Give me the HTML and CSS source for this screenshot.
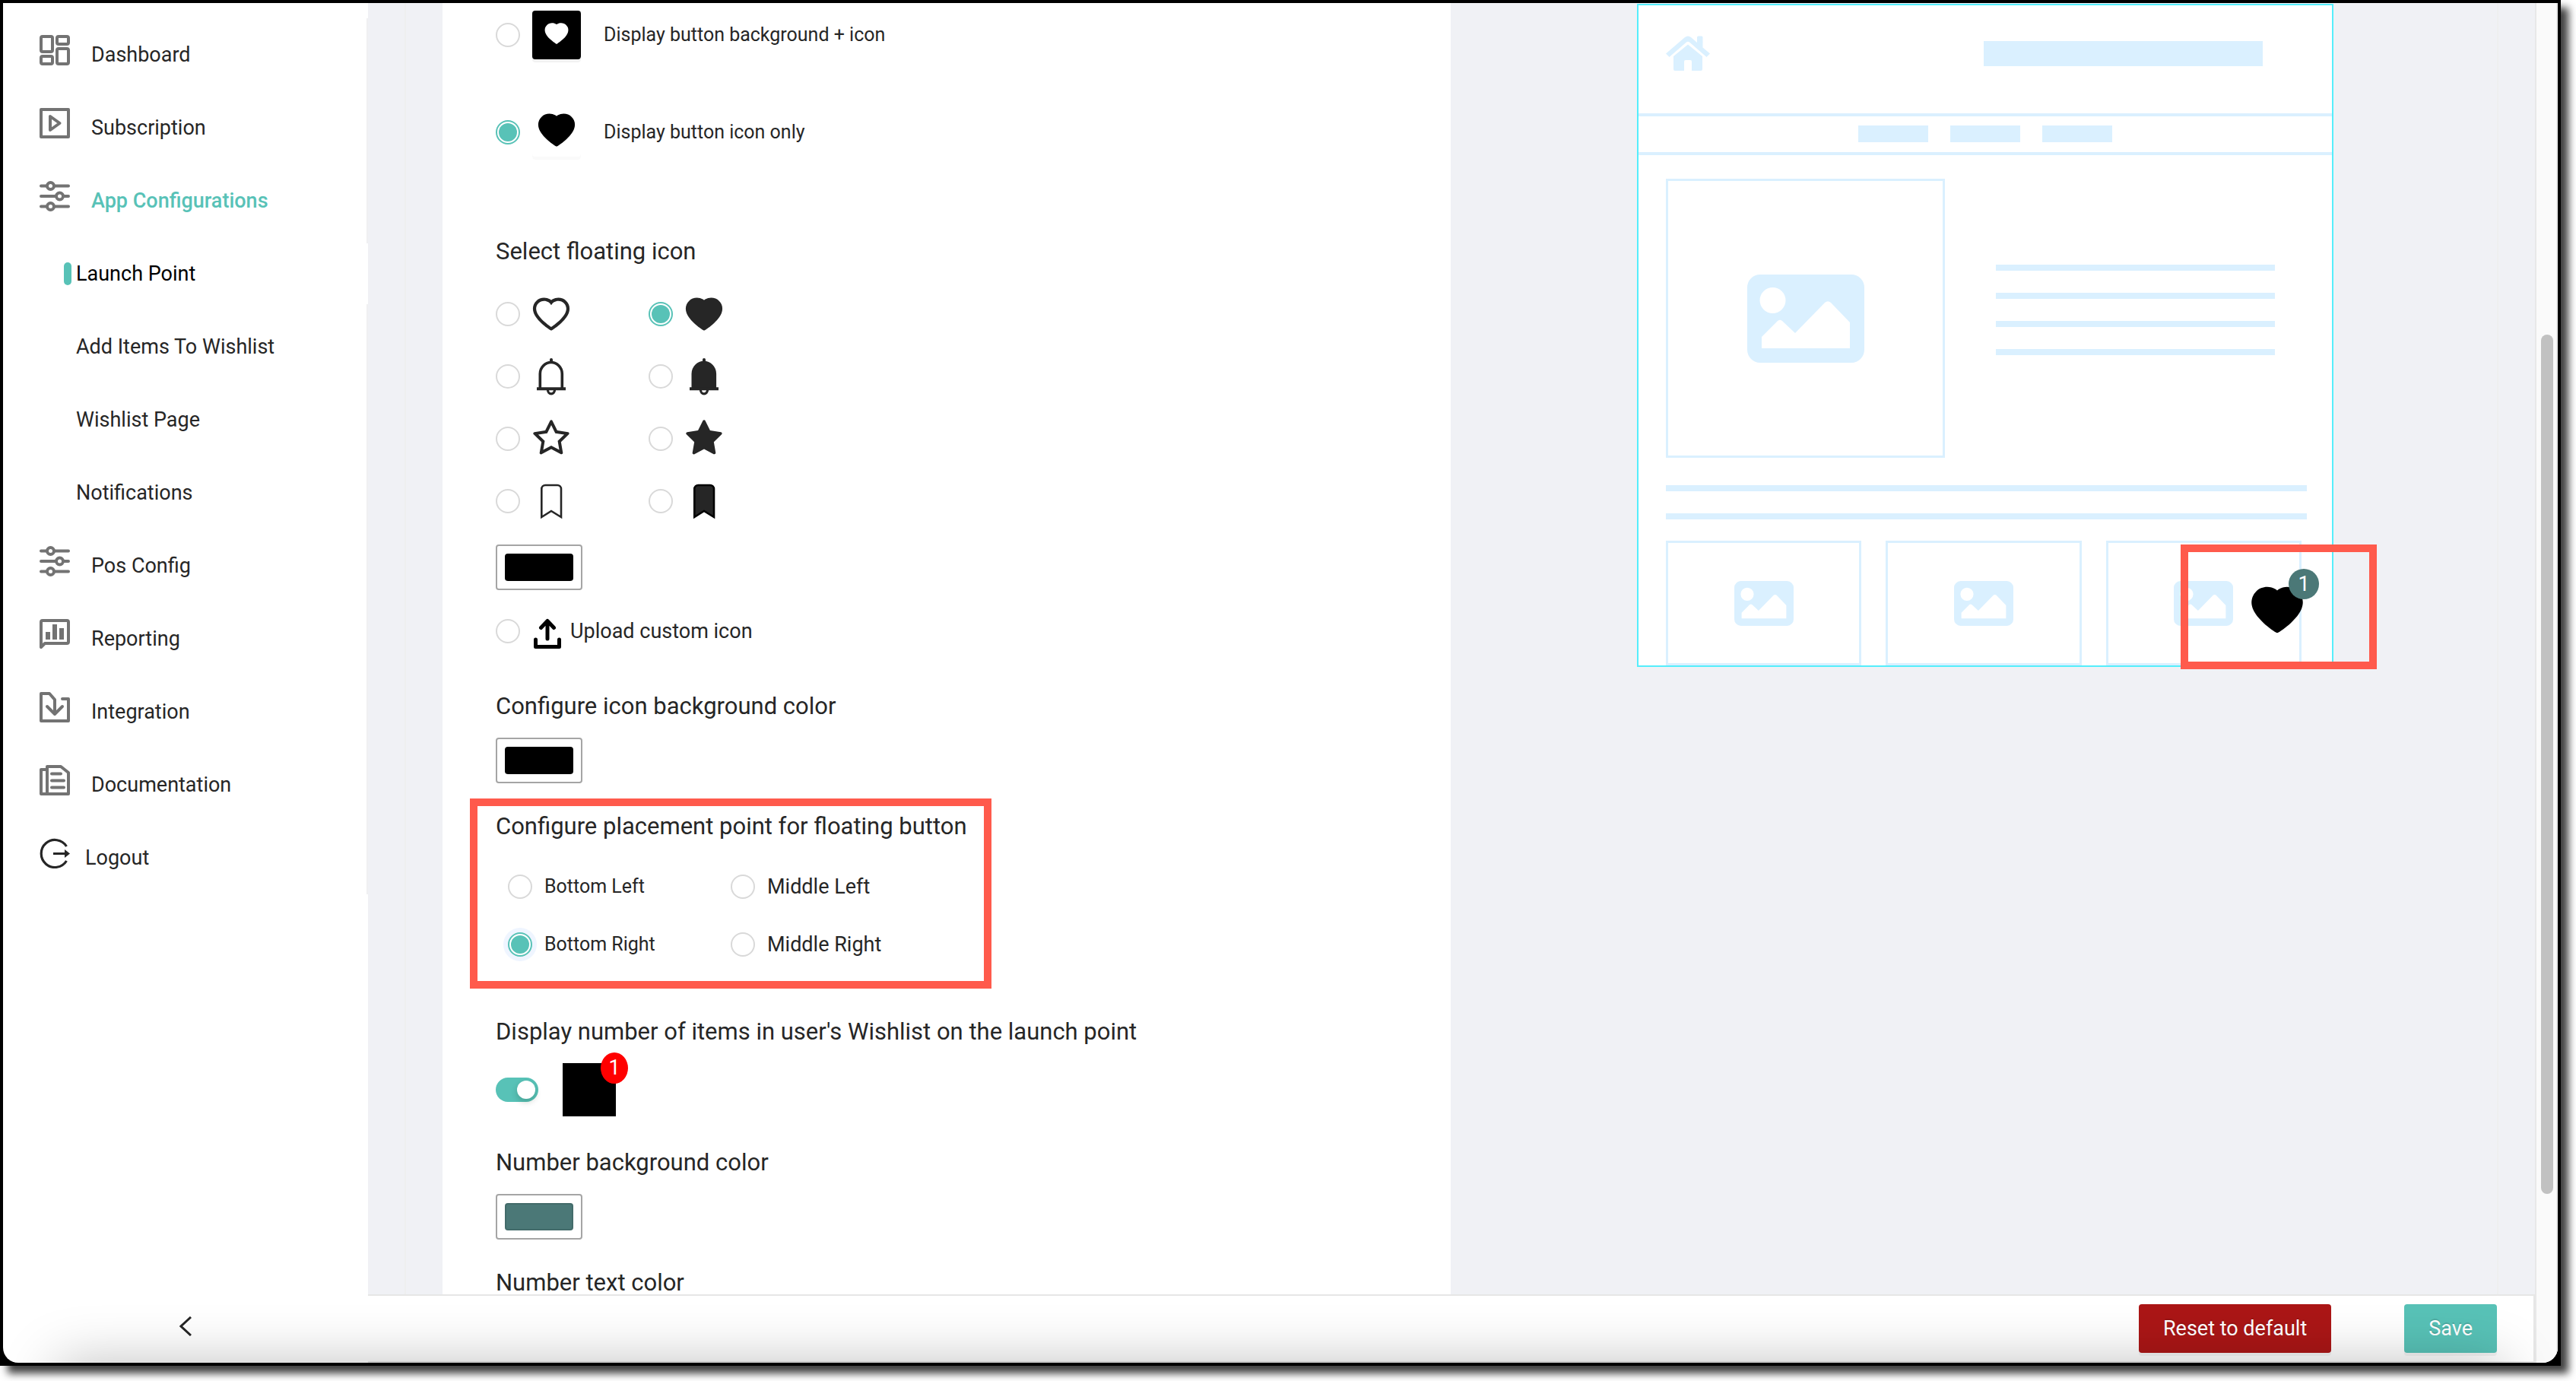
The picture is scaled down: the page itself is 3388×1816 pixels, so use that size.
FILE: index.html
```html
<!DOCTYPE html>
<html lang="en">
<head>
<meta charset="utf-8">
<meta name="viewport" content="width=device-width, initial-scale=1">
<title>Launch Point</title>
<link rel="stylesheet" href="styles.css">
</head>
<body>
<svg class="sprite" aria-hidden="true">
  <symbol id="heart" viewBox="64 64 896 896"><path d="M923 283.6a260.04 260.04 0 0 0-56.9-82.8 264.4 264.4 0 0 0-84-55.5A265.34 265.34 0 0 0 679.7 125c-49.3 0-97.4 13.5-139.2 39-10 6.1-19.5 12.8-28.5 20.1-9-7.3-18.5-14-28.5-20.1-41.8-25.5-89.9-39-139.2-39-35.5 0-69.9 6.8-102.4 20.3-31.4 13-59.7 31.7-84 55.5a258.44 258.44 0 0 0-56.9 82.8c-13.9 32.3-21 66.6-21 101.9 0 33.3 6.8 68 20.3 103.3 11.3 29.5 27.5 60.1 48.2 91 32.8 48.9 77.9 99.9 133.9 151.6 92.8 85.7 184.7 144.9 188.6 147.3l23.7 15.2c10.5 6.7 24 6.7 34.5 0l23.7-15.2c3.9-2.5 95.7-61.6 188.6-147.3 56-51.7 101.1-102.7 133.9-151.6 20.7-30.9 37-61.5 48.2-91 13.5-35.3 20.3-70 20.3-103.3.1-35.3-7-69.6-20.9-101.9z"/></symbol>
  <symbol id="sliders" viewBox="0 0 40 40"><g fill="none" stroke="currentColor" stroke-width="4" stroke-linecap="round"><path d="M2 6.500H9M20 6.500H38M2 20H21M32 20H38M2 33.500H9M20 33.500H38"/><circle cx="14.500" cy="6.500" r="4.500"/><circle cx="26.500" cy="20" r="4.500"/><circle cx="14.500" cy="33.500" r="4.500"/></g></symbol>
  <symbol id="image" viewBox="0 0 154 116"><path fill-rule="evenodd" d="M17 0H137a17 17 0 0 1 17 17V99a17 17 0 0 1-17 17H17A17 17 0 0 1 0 99V17A17 17 0 0 1 17 0zM33.500 17a17 17 0 1 0 0 34 17 17 0 0 0 0-34zM19 97H135V63L110 37q-4-3.500-8 0L63 77 46 61q-3-2.500-6 0L19 82z"/></symbol>
</svg>

<div class="window">
  <div class="app">
    <aside class="sidebar">
      <nav>
        <ul class="menu">
          <li><a class="menu-link" href="#dashboard">
            <svg class="menu-icon" viewBox="0 0 40 40"><g fill="none" stroke="currentColor" stroke-width="4"><rect x="2" y="2" width="15" height="20" rx="2"/><rect x="23" y="2" width="15" height="10" rx="2"/><rect x="2" y="28" width="15" height="10" rx="2"/><rect x="23" y="18" width="15" height="20" rx="2"/></g></svg>
            Dashboard</a></li>
          <li><a class="menu-link" href="#subscription">
            <svg class="menu-icon" viewBox="0 0 40 40"><g fill="none" stroke="currentColor" stroke-width="4" stroke-linejoin="round"><rect x="2" y="2" width="36" height="36"/><path d="M14 11V29L26.500 20z"/></g></svg>
            Subscription</a></li>
          <li><a class="menu-link open" href="#app-configurations">
            <svg class="menu-icon"><use href="#sliders"/></svg>
            App Configurations</a></li>
          <li>
            <ul class="submenu">
              <li><a class="menu-link current" href="#launch-point" aria-current="page">Launch Point</a></li>
              <li><a class="menu-link" href="#add-items">Add Items To Wishlist</a></li>
              <li><a class="menu-link" href="#wishlist-page">Wishlist Page</a></li>
              <li><a class="menu-link" href="#notifications">Notifications</a></li>
            </ul>
          </li>
          <li><a class="menu-link" href="#pos-config">
            <svg class="menu-icon"><use href="#sliders"/></svg>
            Pos Config</a></li>
          <li><a class="menu-link" href="#reporting">
            <svg class="menu-icon" viewBox="0 0 40 40"><path d="M2 37V4a2 2 0 0 1 2-2H36a2 2 0 0 1 2 2V30a2 2 0 0 1-2 2H7z" fill="none" stroke="currentColor" stroke-width="4" stroke-linejoin="round"/><path fill="currentColor" d="M8 17h6v10H8zM17 7h6v20h-6zM26 12h6v15h-6z"/></svg>
            Reporting</a></li>
          <li><a class="menu-link" href="#integration">
            <svg class="menu-icon" viewBox="0 0 40 40"><g fill="none" stroke="currentColor" stroke-width="4" stroke-linejoin="round" stroke-linecap="round"><path d="M20 28V10L13 2H2V38H38V9H30"/><path d="M10 19 20 29 30 19"/></g></svg>
            Integration</a></li>
          <li><a class="menu-link" href="#documentation">
            <svg class="menu-icon" viewBox="0 0 40 40"><g fill="none" stroke="currentColor" stroke-width="4" stroke-linejoin="round" stroke-linecap="round"><path d="M10 6H2V38H38V10L28 2H10V38"/><path d="M16 11.500H28M16 20.500H32M16 29.500H32"/></g></svg>
            Documentation</a></li>
          <li><a class="menu-link logout" href="#logout">
            <svg class="menu-icon" viewBox="0 0 40 40"><path d="M35.500 11A18 18 0 1 0 35.500 30M18 20.500H35" fill="none" stroke="currentColor" stroke-width="3.200"/><path fill="currentColor" d="M33 15 40 20.500 33 26z"/></svg>
            Logout</a></li>
        </ul>
      </nav>
      <button class="collapse" type="button" aria-label="Collapse menu">
        <svg viewBox="0 0 16 26"><path d="M15 1 2 13 15 25" fill="none" stroke="currentColor" stroke-width="3"/></svg>
      </button>
    </aside>

    <main class="main">
      <div class="content">
        <div class="columns">
          <form class="card" id="settings">
            <div class="display-options">
              <label class="display-option"><input class="radio" type="radio" name="display"><span class="tile tile-dark"><svg><use href="#heart"/></svg></span>Display button background + icon</label>
              <label class="display-option"><input class="radio" type="radio" name="display" checked><span class="tile"><svg><use href="#heart"/></svg></span>Display button icon only</label>
            </div>

            <section class="icon-section">
              <h2 class="heading">Select floating icon</h2>
              <div class="icon-grid">
                <label class="icon-option"><input class="radio" type="radio" name="icon" aria-label="Heart outline"><svg class="glyph" viewBox="64 64 896 896"><path fill="currentColor" d="M923 283.6a260.04 260.04 0 0 0-56.9-82.8 264.4 264.4 0 0 0-84-55.5A265.34 265.34 0 0 0 679.7 125c-49.3 0-97.4 13.5-139.2 39-10 6.1-19.5 12.8-28.5 20.1-9-7.3-18.5-14-28.5-20.1-41.8-25.5-89.9-39-139.2-39-35.5 0-69.9 6.8-102.4 20.3-31.4 13-59.7 31.7-84 55.5a258.44 258.44 0 0 0-56.9 82.8c-13.9 32.3-21 66.6-21 101.9 0 33.3 6.8 68 20.3 103.3 11.3 29.5 27.5 60.1 48.2 91 32.8 48.9 77.9 99.9 133.9 151.6 92.8 85.7 184.7 144.9 188.6 147.3l23.7 15.2c10.5 6.7 24 6.7 34.5 0l23.7-15.2c3.9-2.5 95.7-61.6 188.6-147.3 56-51.7 101.1-102.7 133.9-151.6 20.7-30.9 37-61.5 48.2-91 13.5-35.3 20.3-70 20.3-103.3.1-35.3-7-69.6-20.9-101.9zM512 814.8S156 586.7 156 385.5C156 283.6 240.3 201 344.3 201c73.1 0 136.5 40.8 167.7 100.4C543.2 241.8 606.600 201 679.7 201c104 0 188.3 82.600 188.3 184.5 0 201.2-356 429.3-356 429.3z"/></svg></label>
                <label class="icon-option"><input class="radio" type="radio" name="icon" aria-label="Heart" checked><svg class="glyph"><use href="#heart"/></svg></label>

                <label class="icon-option"><input class="radio" type="radio" name="icon" aria-label="Bell outline"><svg class="glyph" viewBox="0 0 50 50"><g fill="none" stroke="currentColor"><path stroke-width="3.600" d="M10.300 40V21.500a14.500 15 0 0 1 29 0V40"/><path stroke-width="4" stroke-linecap="round" d="M25 3V5"/><path stroke-width="4" d="M6 41.300H44"/><path stroke-width="3.200" d="M20.500 43a4.500 4.800 0 0 0 9 0"/></g></svg></label>
                <label class="icon-option"><input class="radio" type="radio" name="icon" aria-label="Bell"><svg class="glyph" viewBox="0 0 50 50"><g fill="none" stroke="currentColor"><path fill="currentColor" stroke-width="3.600" d="M10.300 40V21.500a14.500 15 0 0 1 29 0V40"/><path stroke-width="4" stroke-linecap="round" d="M25 3V5"/><path stroke-width="4" d="M6 41.300H44"/><path stroke-width="3.200" d="M20.500 43a4.500 4.800 0 0 0 9 0"/></g></svg></label>

                <label class="icon-option"><input class="radio" type="radio" name="icon" aria-label="Star outline"><svg class="glyph" viewBox="64 64 896 896"><path fill="currentColor" d="M908.1 353.1l-253.9-36.9L540.7 86.1c-3.1-6.3-8.2-11.4-14.5-14.5-15.8-7.8-35-1.3-42.9 14.5L369.8 316.2l-253.9 36.9c-7 1-13.4 4.3-18.3 9.3a32.05 32.05 0 0 0 .6 45.3l183.7 179.1-43.4 252.9a31.95 31.95 0 0 0 46.4 33.7L512 754l227.1 119.4c6.2 3.3 13.4 4.4 20.3 3.2 17.4-3 29.1-19.5 26.1-36.9l-43.4-252.9 183.7-179.1c5-4.9 8.3-11.3 9.3-18.3 2.7-17.5-9.5-33.7-27-36.3zM664.8 561.6l36.1 210.3L512 672.7 323.1 772l36.1-210.3-152.8-149L417.6 382 512 190.7 606.4 382l211.2 30.7-152.8 148.9z"/></svg></label>
                <label class="icon-option"><input class="radio" type="radio" name="icon" aria-label="Star"><svg class="glyph" viewBox="64 64 896 896"><path fill="currentColor" d="M908.1 353.1l-253.9-36.9L540.7 86.1c-3.1-6.3-8.2-11.4-14.5-14.5-15.8-7.8-35-1.3-42.9 14.5L369.8 316.2l-253.9 36.9c-7 1-13.4 4.3-18.3 9.3a32.05 32.05 0 0 0 .6 45.3l183.7 179.1-43.4 252.9a31.95 31.95 0 0 0 46.4 33.7L512 754l227.1 119.4c6.2 3.3 13.4 4.4 20.3 3.2 17.4-3 29.1-19.5 26.1-36.9l-43.4-252.9 183.7-179.1c5-4.9 8.3-11.3 9.3-18.3 2.7-17.5-9.5-33.7-27-36.3z"/></svg></label>

                <label class="icon-option"><input class="radio" type="radio" name="icon" aria-label="Bookmark outline"><svg class="glyph" viewBox="0 0 50 50"><path fill="none" stroke="currentColor" stroke-width="2.600" d="M12.300 46V9a5 5 0 0 1 5-5H33a5 5 0 0 1 5 5V46L25 38z"/></svg></label>
                <label class="icon-option"><input class="radio" type="radio" name="icon" aria-label="Bookmark"><svg class="glyph" viewBox="0 0 50 50"><path fill="currentColor" stroke="#000" stroke-width="2.600" d="M12.300 46V9a5 5 0 0 1 5-5H33a5 5 0 0 1 5 5V46L25 38z"/></svg></label>
              </div>
              <input class="swatch" type="color" value="#000000" aria-label="Icon color">
              <label class="upload"><input class="radio" type="radio" name="icon"><svg class="upload-icon" viewBox="0 0 36 40"><g fill="none" stroke="#000" stroke-width="5" stroke-linecap="round" stroke-linejoin="round"><path d="M18 4V27M9.500 12.500 18 3.500 26.500 12.500"/><path d="M2.500 28V37.500H33.500V28"/></g></svg>Upload custom icon</label>
            </section>

            <section class="background-section">
              <label class="heading" for="icon-background">Configure icon background color</label>
              <input class="swatch" type="color" id="icon-background" value="#000000">
            </section>

            <section class="placement">
              <h2 class="heading">Configure placement point for floating button</h2>
              <div class="placement-grid">
                <label class="small"><input class="radio" type="radio" name="placement">Bottom Left</label>
                <label><input class="radio" type="radio" name="placement">Middle Left</label>
                <label class="small"><input class="radio focused" type="radio" name="placement" checked>Bottom Right</label>
                <label><input class="radio" type="radio" name="placement">Middle Right</label>
              </div>
            </section>

            <section class="count-section">
              <label class="heading" for="show-count">Display number of items in user's Wishlist on the launch point</label>
              <div class="count-row">
                <input class="switch" type="checkbox" role="switch" id="show-count" checked>
                <span class="count-sample"><span class="count-badge">1</span></span>
              </div>
            </section>

            <section class="number-section">
              <label class="heading" for="number-background">Number background color</label>
              <input class="swatch" type="color" id="number-background" value="#4b7877">
            </section>

            <section class="text-section">
              <label class="heading" for="number-text">Number text color</label>
              <input class="swatch" type="color" id="number-text" value="#ffffff">
            </section>
          </form>

          <div class="preview-column">
            <div class="preview">
              <div class="preview-header">
                <svg class="home" viewBox="0 0 58 46"><path d="M0 23.500 25 2q4-3 8 0l8 7V2q0-1.500 1.500-1.500H47q1.500 0 1.500 1.500V15.500L58 23.500 53.500 28 31 8.500q-2-1.500-4 0L4.500 28z"/><path d="M10 27 29 11.500 48 27V44q0 2-2 2H34V34q0-2-2-2H26q-2 0-2 2V46H12q-2 0-2-2z"/></svg>
                <div class="search"></div>
              </div>
              <div class="preview-nav"><i></i><i></i><i></i></div>
              <div class="product">
                <div class="frame frame-large"><svg class="image-large"><use href="#image"/></svg></div>
                <div class="lines product-lines"><i></i><i></i><i></i><i></i></div>
              </div>
              <div class="lines wide-lines"><i></i><i></i></div>
              <div class="thumbs">
                <div class="frame"><svg class="image-small"><use href="#image"/></svg></div>
                <div class="frame"><svg class="image-small"><use href="#image"/></svg></div>
                <div class="frame"><svg class="image-small"><use href="#image"/></svg></div>
              </div>
              <div class="launcher"><svg><use href="#heart"/></svg><span class="launcher-count">1</span></div>
              <div class="callout"></div>
            </div>
          </div>
        </div>
      </div>
      <footer class="actions">
        <button class="button danger" type="reset" form="settings">Reset to default</button>
        <button class="button primary" type="submit" form="settings">Save</button>
      </footer>
    </main>

    <div class="scrollbar" aria-hidden="true"><span class="thumb"></span></div>
  </div>
</div>
</body>
</html>
```
FILE: styles.css
```css
:root {
  --teal: #58c2b7;
  --text: #262626;
  --wire: #daf0ff;
  --callout: #ff5a4c;
}

* { box-sizing: border-box; }

body {
  margin: 0;
  padding: 0 20px 20px 0;
  background: #fff;
  color: var(--text);
  font: 27px/32px Roboto, "Liberation Sans", sans-serif;
  overflow: hidden;
}

ul { margin: 0; padding: 0; list-style: none; }
svg { display: block; flex: none; }
.sprite { position: absolute; width: 0; height: 0; }

.window {
  height: calc(100vh - 20px);
  padding: 4px;
  background: #000;
  box-shadow: 10px 10px 10px rgba(0, 0, 0, .75);
}

.app {
  position: relative;
  display: flex;
  height: 100%;
  background: #fff;
  border-radius: 0 0 20px 20px;
  overflow: hidden;
}

/* shade that rises from the bottom edge of the window */
.app::after {
  content: "";
  position: absolute;
  left: 72px;
  right: 72px;
  top: 100%;
  height: 100px;
  box-shadow: 0 0 72px rgba(0, 0, 0, .25);
  pointer-events: none;
}

/* Sidebar */
.sidebar {
  flex: 0 0 480px;
  display: flex;
  flex-direction: column;
  justify-content: space-between;
  padding-top: 20px;
}

.menu, .submenu { display: grid; gap: 16px; }
.menu { padding: 8px 0; border-right: 2px solid #f0f0f2; }

.menu-link {
  display: flex;
  align-items: center;
  gap: 28px;
  height: 80px;
  padding-left: 48px;
  color: var(--text);
  text-decoration: none;
}

.menu-icon { width: 40px; height: 40px; margin-bottom: 12px; color: #737373; }
.menu-link.open { color: var(--teal); font-weight: 500; }
.menu-link.logout { gap: 20px; }
.logout .menu-icon { color: var(--text); }

.submenu .menu-link { padding-left: 96px; }
.submenu .current {
  gap: 6px;
  margin-right: -2px;
  padding-left: 80px;
  background: #fff;
  color: #000;
}
.current::before {
  content: "";
  width: 10px;
  height: 30px;
  border-radius: 5px;
  background: var(--teal);
}

.collapse {
  display: flex;
  align-items: center;
  justify-content: center;
  height: 96px;
  padding: 0;
  border: 0;
  background: none;
  color: var(--text);
}
.collapse svg { width: 16px; height: 26px; }

/* Main area */
.main {
  flex: 1;
  display: flex;
  flex-direction: column;
  min-width: 0;
}

.content {
  flex: 1;
  min-height: 0;
  padding: 0 48px;
  background: #f0f1f5;
  overflow: hidden;
}

.columns {
  display: grid;
  grid-template-columns: 1326fr 1376fr;
  min-height: 100%;
  padding-left: 48px;
  border: solid #eeefef;
  border-width: 0 2px;
}

.card { padding: 10px 68px 32px 70px; background: #fff; }

.heading {
  display: block;
  margin: 0;
  font-size: 31px;
  font-weight: 400;
  line-height: 42px;
}

.radio {
  appearance: none;
  flex: none;
  width: 32px;
  height: 32px;
  margin: 0;
  border: 2px solid #d9d9d9;
  border-radius: 50%;
  background: #fff;
}
.radio:checked {
  padding: 2px;
  border-color: var(--teal);
  background: var(--teal) content-box;
}
.radio.focused { box-shadow: 0 0 0 6px #eff5ff; }

.display-options { display: grid; gap: 64px; }
.display-option {
  display: flex;
  align-items: center;
  gap: 16px;
  font-size: 25px;
}
.tile {
  display: flex;
  align-items: center;
  justify-content: center;
  width: 64px;
  height: 64px;
  margin-right: 14px;
  border-radius: 4px;
  box-shadow: 0 4px 0 rgba(0, 0, 0, .02);
}
.tile svg { width: 50px; height: 50px; margin-bottom: 6px; }
.tile-dark { background: #000; fill: #fff; box-shadow: 0 4px 0 rgba(0, 0, 0, .05); }
.tile-dark svg { width: 32px; height: 32px; margin-bottom: 4px; }

.icon-section { margin-top: 104px; }
.icon-grid {
  display: grid;
  grid-template-columns: 201px max-content;
  gap: 32px 0;
  margin: 36px 0 32px;
}
.icon-option { display: flex; align-items: center; gap: 16px; }
.glyph { width: 50px; height: 50px; fill: currentColor; }

.swatch {
  display: block;
  width: 114px;
  height: 60px;
  padding: 10px;
  border: 2px solid #a5a5a5;
  border-radius: 4px;
  background: #fff;
}
.swatch::-webkit-color-swatch-wrapper { padding: 0; }
.swatch::-webkit-color-swatch { border: 2px solid rgba(0, 0, 0, .1); border-radius: 4px; }

.upload {
  display: flex;
  align-items: center;
  height: 50px;
  margin-top: 29px;
}
.upload-icon { width: 36px; height: 40px; margin: 6px 12px 0 18px; }

.background-section { margin-top: 53px; }
.background-section .swatch,
.number-section .swatch,
.text-section .swatch { margin-top: 20px; }

.placement {
  width: max-content;
  margin: 20px 0 0 -34px;
  padding: 6px 22px 32px 24px;
  border: 10px solid var(--callout);
}
.placement-grid {
  display: grid;
  grid-template-columns: 293px 293px;
  gap: 44px 0;
  margin: 42px 0 0 16px;
}
.placement-grid label { display: flex; align-items: center; gap: 16px; }
.small { font-size: 25px; }

.count-section { margin-top: 36px; }
.count-row {
  display: flex;
  align-items: center;
  gap: 32px;
  margin-top: 20px;
}
.switch {
  appearance: none;
  width: 56px;
  height: 32px;
  margin: 0;
  padding: 4px;
  border-radius: 16px;
  background: var(--teal);
}
.switch::before {
  content: "";
  display: block;
  width: 24px;
  height: 24px;
  margin-left: auto;
  border-radius: 50%;
  background: #fff;
  box-shadow: 0 4px 8px rgba(0, 35, 11, .2);
}
.count-sample {
  position: relative;
  width: 70px;
  height: 70px;
  background: #000;
}
.count-badge {
  position: absolute;
  top: -14px;
  right: -16px;
  width: 36px;
  height: 41px;
  border-radius: 50%;
  background: #f00;
  color: #fff;
  line-height: 41px;
  text-align: center;
}

.number-section { margin-top: 40px; }
.text-section { margin-top: 36px; }

/* Store page preview */
.preview-column { padding-top: 1px; }
.preview {
  position: relative;
  width: 916px;
  max-width: calc(100% - 245px);
  margin-left: 245px;
  border: 2px solid #55eefc;
  background: #fff;
  fill: var(--wire);
}
.preview i { display: block; background: var(--wire); }

.preview-header {
  display: flex;
  align-items: center;
  justify-content: space-between;
  padding: 40px 91px 56px 36px;
  border-bottom: 4px solid var(--wire);
}
.home { width: 58px; height: 46px; }
.search { width: 367px; height: 33px; background: var(--wire); }

.preview-nav {
  display: flex;
  justify-content: center;
  gap: 29px;
  padding: 12px 0 13px;
  border-bottom: 4px solid var(--wire);
}
.preview-nav i { width: 92px; height: 22px; }

.frame {
  display: flex;
  align-items: center;
  justify-content: center;
  border: 3px solid var(--wire);
}
.frame-large { width: 367px; height: 367px; }
.image-large { width: 154px; height: 116px; }
.image-small { width: 78px; height: 59px; }

.product {
  display: flex;
  align-items: center;
  gap: 67px;
  padding: 31px 36px 0;
}
.lines { display: grid; gap: 29px; }
.lines i { height: 8px; }
.product-lines { width: 367px; padding-bottom: 22px; }
.wide-lines { margin: 36px 33px 28px 36px; }

.thumbs {
  display: grid;
  grid-template-columns: repeat(3, 1fr);
  gap: 32px;
  padding: 0 40px 0 36px;
}
.thumbs .frame { height: 164px; }

.launcher {
  position: absolute;
  right: 37px;
  bottom: 38px;
}
.launcher > svg { width: 70px; height: 70px; fill: #000; }
.launcher-count {
  position: absolute;
  top: -19px;
  right: -20px;
  width: 40px;
  height: 40px;
  border-radius: 50%;
  background: #4b7877;
  color: #fff;
  line-height: 40px;
  text-align: center;
}
.callout {
  position: absolute;
  right: -59px;
  bottom: -5px;
  width: 258px;
  height: 164px;
  border: 10px solid var(--callout);
}

/* Footer bar */
.actions {
  display: flex;
  align-items: center;
  justify-content: flex-end;
  gap: 96px;
  height: 90px;
  padding-right: 48px;
  border: solid #e6e6e6;
  border-width: 2px 2px 2px 0;
  background: #fff;
}
.button {
  height: 64px;
  padding: 0 32px;
  border: 0;
  border-radius: 4px;
  color: #fff;
  font: inherit;
  text-shadow: 0 -2px 0 rgba(0, 0, 0, .12);
  box-shadow: 0 4px 0 rgba(0, 0, 0, .045);
}
.danger { background: #ab1616; }
.primary { background: var(--teal); }

.scrollbar {
  flex: 0 0 30px;
  display: grid;
  grid-template-rows: 436fr 1130fr 222fr;
  padding: 0 4px 0 6px;
  border: solid #e8e8e8;
  border-width: 0 2px;
  background: #fafafa;
}
.thumb { grid-row: 2; border-radius: 8px; background: #c1c1c1; }
```
